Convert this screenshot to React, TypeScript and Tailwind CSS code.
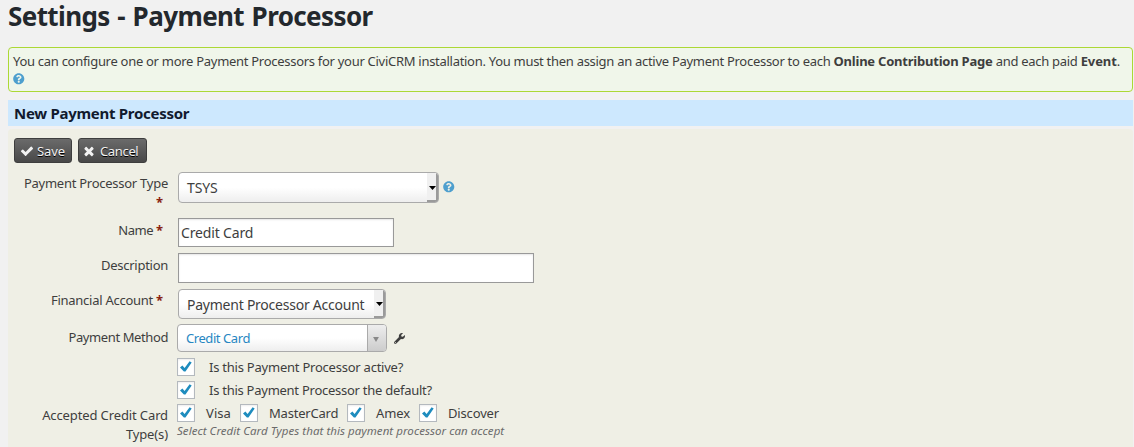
import type { ReactNode } from "react";
import { FaQuestionCircle, FaWrench } from "react-icons/fa";

function CheckIcon({ className }: { className: string }) {
  return (
    <svg viewBox="0 0 1792 1792" fill="currentColor" className={className}>
      <path d="M1671 566q0 40-28 68l-724 724-136 136q-28 28-68 28t-68-28l-136-136-362-362q-28-28-28-68t28-68l136-136q28-28 68-28t68 28l294 295 656-657q28-28 68-28t68 28l136 136q28 28 28 68z" />
    </svg>
  );
}

function TimesIcon({ className }: { className: string }) {
  return (
    <svg viewBox="0 0 1792 1792" fill="currentColor" className={className}>
      <path d="M1490 1322q0 40-28 68l-136 136q-28 28-68 28t-68-28l-294-294-294 294q-28 28-68 28t-68-28l-136-136q-28-28-28-68t28-68l294-294-294-294q-28-28-28-68t28-68l136-136q28-28 68-28t68 28l294 294 294-294q28-28 68-28t68 28l136 136q28 28 28 68t-28 68l-294 294 294 294q28 28 28 68z" />
    </svg>
  );
}

function Button({ className, children }: { className: string; children: ReactNode }) {
  return (
    <button
      className={`flex h-[25px] items-center rounded-[3px] border border-[#3e3e3e] bg-linear-to-b from-[#6b6b6b] to-[#484848] text-[13px] leading-none text-[#f2f2f2] [text-shadow:0_1px_0_#000] ${className}`}
    >
      {children}
    </button>
  );
}

function Star() {
  return <b className="mr-[6px] ml-[3px] inline-block w-[6px] text-center tracking-normal text-[#8a1f11]">*</b>;
}

function Row({ label, required, className, labelClass, children }: {
  label?: ReactNode;
  required?: boolean;
  className: string;
  labelClass?: string;
  children: ReactNode;
}) {
  return (
    <div className={`flex items-start ${className}`}>
      <div className={`w-[160px] shrink-0 whitespace-nowrap text-right leading-[19px] ${labelClass ?? ""}`}>
        {label}
        {required && <Star />}
      </div>
      {children}
    </div>
  );
}

function NativeSelect({ className, children }: { className: string; children: ReactNode }) {
  return (
    <div className={`flex overflow-hidden rounded-[4px] border border-[#aaa] bg-linear-to-b from-white from-50% to-[#eee] text-[14px] ${className}`}>
      <span className="flex-1 pl-2 leading-[30px] whitespace-nowrap">{children}</span>
      <span className="flex w-[11px] items-center justify-end border-r-2 border-b-2 border-[#9a9a9a] bg-[#f0f0f0]">
        <svg viewBox="0 0 7 4" className="mt-[2px] h-[4px] w-[7px] shrink-0">
          <path d="M0 0h7L3.500 4z" fill="#000" />
        </svg>
      </span>
    </div>
  );
}

function Checkbox() {
  return (
    <span className="flex size-[18px] shrink-0 items-center justify-center border border-[#b4b9be] bg-white shadow-[inset_0_1px_2px_rgba(0,0,0,0.07)]">
      <svg viewBox="0 0 18 18" className="size-[18px] shrink-0">
        <path d="M3 9.400 5.400 7.600 7.600 10 12.600 3.200 14.700 4.600 8.500 13.400H6.900z" fill="#1e8cbe" />
      </svg>
    </span>
  );
}

const cards = [
  { name: "Visa", box: "w-[63px]", text: "tracking-[0.08px]" },
  { name: "MasterCard", box: "w-[107px]", text: "tracking-[-0.2px]" },
  { name: "Amex", box: "w-[72px]", text: "tracking-[-0.1px]" },
  { name: "Discover", box: "w-[90px]", text: "tracking-[-0.15px]" },
];

export default function App() {
  return (
    <div className="h-[447px] w-[1134px] overflow-hidden bg-[#f1f1f1] pr-px pl-2 font-['Noto_Sans',sans-serif] text-[13px] text-[#3e3e3e]">
      <h1 className="h-[47px] text-[26px] leading-[33px] font-bold tracking-[-0.6px] [word-spacing:1.4px] whitespace-nowrap text-[#23282d]">
        Settings - Payment Processor
      </h1>

      <div className="h-[45px] rounded-[4px] border border-[#acd835] bg-[#f0f6ea] px-1 pt-[4px] leading-[18px] whitespace-nowrap">
        <p className="tracking-[-0.287px]">
          You can configure one or more Payment Processors for your CiviCRM installation. You must then assign an active Payment Processor to each{" "}
          <b className="tracking-[-0.22px]">Online Contribution Page</b> and each paid{" "}
          <b className="tracking-[-0.11px]">Event</b>.
        </p>
        <FaQuestionCircle className="mt-[3px] size-[11.5px] text-[#4e9fce]" />
      </div>

      <h3 className="mt-2 h-[26px] bg-[#cde8fe] pl-[6px] text-[15px] leading-[26px] font-bold tracking-[-0.28px] text-[#111a2e]">
        New Payment Processor
      </h3>

      <form className="mt-[3px] h-[330px] rounded-t-[4px] bg-[#efefe5] pt-[9px]">
        <div className="flex h-[34px] gap-[6px] pl-[6px]">
          <Button className="w-[58px] pl-[5px]">
            <CheckIcon className="mr-[3px] size-[14px]" />
            <span className="pt-px tracking-[-0.09px]">Save</span>
          </Button>
          <Button className="w-[69px] pl-[3px]">
            <TimesIcon className="mr-[4px] size-[14px]" />
            <span className="pt-px tracking-[-0.35px]">Cancel</span>
          </Button>
        </div>

        <Row
          className="h-[46px]"
          labelClass="pt-[2px] tracking-[-0.26px]"
          label={<>Payment Processor Type<br /><Star /></>}
        >
          <NativeSelect className="ml-[10px] h-[31px] w-[261px]">
            <span className="tracking-[-0.1px]">TSYS</span>
          </NativeSelect>
          <FaQuestionCircle className="mt-[9px] ml-[4px] size-[11.5px] text-[#4e9fce]" />
        </Row>

        <Row className="h-[35px]" label="Name" required labelClass="pt-[3px] tracking-[-0.5px]">
          <div className="ml-[10px] h-[29px] w-[216px] border border-[#999] bg-white pl-[2px] text-[14px] leading-[27px] tracking-[-0.15px] shadow-[inset_0_1px_2px_rgba(0,0,0,0.1)]">
            Credit Card
          </div>
        </Row>

        <Row className="h-[36px]" label="Description" labelClass="pt-[3px] tracking-[-0.27px]">
          <div className="ml-[10px] h-[30px] w-[356px] border border-[#999] bg-white shadow-[inset_0_1px_2px_rgba(0,0,0,0.1)]" />
        </Row>

        <Row className="h-[35px]" label="Financial Account" required labelClass="pt-[2px] tracking-[-0.26px]">
          <NativeSelect className="ml-[10px] h-[30px] w-[208px]">
            <span className="tracking-[-0.24px]">Payment Processor Account</span>
          </NativeSelect>
        </Row>

        <Row className="h-[34px]" label="Payment Method" labelClass="pt-[4px] tracking-[-0.4px]">
          <div className="ml-[9px] flex h-[28px] w-[210px] overflow-hidden rounded-[4px] border border-[#aaa] bg-linear-to-b from-white from-50% to-[#eee]">
            <span className="flex-1 pl-2 leading-[27px] tracking-[-0.43px] text-[#2786c2]">Credit Card</span>
            <span className="flex w-[19px] items-center justify-center border-l border-[#aaa] bg-linear-to-b from-[#eee] to-[#ccc]">
              <svg viewBox="0 0 7 6" className="mt-[2px] mr-[2px] h-[5px] w-[6px]">
                <path d="M0 0h7L3.500 6z" fill="#888" />
              </svg>
            </span>
          </div>
          <FaWrench className="mt-[9px] ml-[7px] size-[11px] text-[#3e3e3e]" />
        </Row>

        <Row className="h-[23px]">
          <span className="ml-[9px] flex items-center gap-[14px] leading-[18px] tracking-[-0.23px]">
            <Checkbox />
            Is this Payment Processor active?
          </span>
        </Row>
        <Row className="h-[23px]">
          <span className="ml-[9px] flex items-center gap-[14px] leading-[18px] tracking-[-0.26px]">
            <Checkbox />
            Is this Payment Processor the default?
          </span>
        </Row>

        <Row
          className="h-[43px]"
          labelClass="pt-[2px] tracking-[-0.12px]"
          label={<>Accepted Credit Card<br />Type(s)</>}
        >
          <div className="ml-[9px]">
            <div className="flex">
              {cards.map((card) => (
                <span key={card.name} className={`flex items-center gap-[11px] leading-[18px] ${card.box} ${card.text}`}>
                  <Checkbox />
                  {card.name}
                </span>
              ))}
            </div>
            <div className="text-[11.5px] leading-[18px] tracking-[0.05px] whitespace-nowrap text-[#6b6b6b] italic">
              Select Credit Card Types that this payment processor can accept
            </div>
          </div>
        </Row>
      </form>
    </div>
  );
}
